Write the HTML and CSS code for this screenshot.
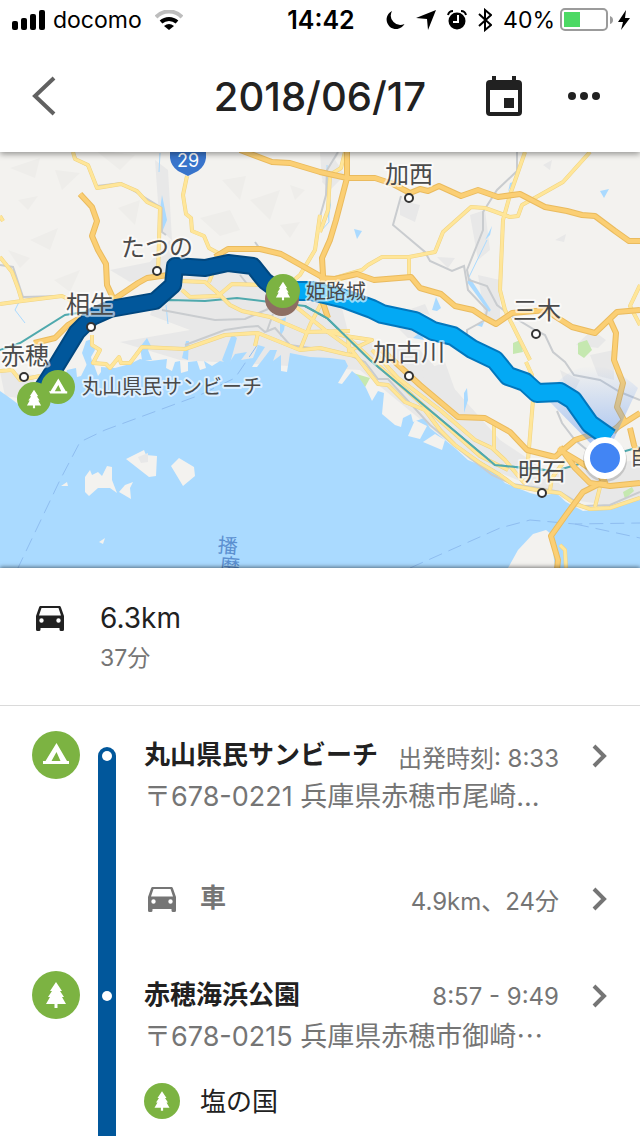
FILE: index.html
```
<!DOCTYPE html>
<html lang="ja">

<head>
    <meta charset="UTF-8">
    <meta name="viewport" content="width=device-width, initial-scale=1.0">
    <title>2018/06/17</title>
    <link rel="stylesheet" href="styles.css">
</head>

<body>
    <!-- Shared icons -->
    <svg class="icon-defs" aria-hidden="true">
        <symbol id="icon-car" viewBox="0 0 28 25">
            <path fill-rule="evenodd" d="M5 0h18c1 0 1.700.5 2 1.400L28 10v13.500q0 1.500-1.500 1.500h-1.500q-1.500 0-1.500-1.500V22H4.500v1.500Q4.500 25 3 25H1.500Q0 25 0 23.500V10L3 1.400C3.300.5 4 0 5 0zM5.500 2 3 9.500h22L22.500 2zM5.500 12.300a2.200 2.200 0 1 0 0 4.400 2.200 2.200 0 0 0 0-4.400zm17 0a2.200 2.200 0 1 0 0 4.400 2.200 2.200 0 0 0 0-4.400z"/>
        </symbol>
        <symbol id="icon-tree" viewBox="0 0 48 48">
            <circle cx="24" cy="24" r="24" fill="#7cb342"/>
            <path fill="#fff" d="M24 11l6 9h-2l4 6h-2l4 7h-8.500v4h-3v-4H14l4-7h-2l4-6h-2z"/>
        </symbol>
        <symbol id="icon-camp" viewBox="0 0 48 48">
            <circle cx="24" cy="24" r="24" fill="#7cb342"/>
            <path fill="#fff" fill-rule="evenodd" d="M24.500 12 35 30h2v3H11v-3h2.500zM24.500 21 19.500 30h9z"/>
        </symbol>
        <symbol id="icon-chevron" viewBox="0 0 16 24">
            <path d="M2 2l10 10L2 22" fill="none" stroke="#757575" stroke-width="4"/>
        </symbol>
    </svg>

    <!-- Status bar -->
    <div class="status-bar">
        <div class="status-left">
            <svg width="34" height="20" viewBox="0 0 34 20">
                <rect x="0" y="11" width="6" height="9" rx="2"/>
                <rect x="9" y="8" width="6" height="12" rx="2"/>
                <rect x="18" y="4" width="6" height="16" rx="2"/>
                <rect x="27" y="0" width="6" height="20" rx="2"/>
            </svg>
            <span class="carrier">docomo</span>
            <svg width="28" height="20" viewBox="0 0 28 20" fill="none">
                <path d="M1 7a18 18 0 0 1 26 0" stroke="#bdbdbd" stroke-width="4"/>
                <path d="M6 12a12 12 0 0 1 16 0" stroke="#000" stroke-width="4"/>
                <path d="M9 16q5-4 10 0l-5 4z" fill="#000"/>
            </svg>
        </div>
        <span class="clock">14:42</span>
        <div class="status-right">
            <svg width="19" height="20" viewBox="0 0 19 20"><path d="M6 1A9.500 9.500 0 1 0 18.500 14 9.500 9.500 0 0 1 6 1z"/></svg>
            <svg width="20" height="20" viewBox="0 0 20 20"><path d="M20 0 12 20 11 9 0 8z"/></svg>
            <svg width="20" height="20" viewBox="0 0 20 20">
                <circle cx="10" cy="11" r="8.500"/>
                <path d="M1 5Q2 1 6 1M14 1q4 0 5 4" stroke="#000" stroke-width="2" fill="none"/>
                <path d="M11 5v7H6" stroke="#fff" stroke-width="2" fill="none"/>
            </svg>
            <svg width="14" height="24" viewBox="0 0 14 24" fill="none" stroke="#000" stroke-width="2"><path d="M1 6l12 11-6 5V2l6 5L1 18"/></svg>
            <span>40%</span>
            <svg class="battery" width="53" height="24" viewBox="0 0 53 24">
                <rect x="1" y="1" width="46" height="21" rx="4" fill="none" stroke="#9b9b9b" stroke-width="2"/>
                <rect x="4" y="4" width="16" height="15" fill="#4cd964"/>
                <path d="M50 8q3 1 3 4t-3 4z" fill="#9b9b9b"/>
            </svg>
            <svg width="12" height="20" viewBox="0 0 12 20"><path d="M8 0 0 12h5L3 20 12 8H7z"/></svg>
        </div>
    </div>

    <!-- Header -->
    <header class="header">
        <button type="button" class="icon-button" aria-label="戻る">
            <svg width="24" height="40" viewBox="0 0 24 40"><path d="M22 2 3 20l19 18" fill="none" stroke="#616161" stroke-width="4"/></svg>
        </button>
        <h1>2018/06/17</h1>
        <div class="actions">
            <button type="button" class="icon-button" aria-label="カレンダー">
                <svg width="36" height="40" viewBox="0 0 36 40" fill="#212121">
                    <path fill-rule="evenodd" d="M6 0h4v4h16V0h4v4h2q4 0 4 4v28q0 4-4 4H4q-4 0-4-4V8q0-4 4-4h2zM4 14v22h28V14z"/>
                    <rect x="18" y="22" width="10" height="10"/>
                </svg>
            </button>
            <button type="button" class="icon-button" aria-label="その他">
                <svg width="32" height="8" viewBox="0 0 32 8" fill="#212121"><circle cx="4" cy="4" r="4"/><circle cx="16" cy="4" r="4"/><circle cx="28" cy="4" r="4"/></svg>
            </button>
        </div>
    </header>

    <!-- Map -->
    <div class="map">
        <svg viewBox="0 152 640 416" role="img" aria-label="地図">
            <defs>
                <linearGradient id="beam" x1="0" y1="1" x2="0" y2="0">
                    <stop offset="0" stop-color="#4285f4" stop-opacity=".5"/>
                    <stop offset="1" stop-color="#4285f4" stop-opacity="0"/>
                </linearGradient>
                <g id="minor">
                    <path d="M0 304 22 301 62 296 72 301M0 257 12 272 18 288 22 301M0 216 3 221M73 152 75 159 88 165 97 188 121 184 137 191 147 202 160 208 158 274M187 176 183 195 186 214 191 218 192 231 204 236 209 248 220 254M320 215 315 250 300 275 288 285"/>
                    <path d="M180 281 205 282 220 295 230 305 242 311 270 317 305 332 350 331M182 290 190 297 218 296 232 284 265 285M209 282 214 270M92 335 92 345 100 350 93 363 106 364 110 368 119 357 121 363 130 363 142 347 185 349 225 335 258 333 300 350 320 348 345 354 356 356M258 333 255 346M300 350 310 325 322 302M0 371 12 370 20 380 40 376"/>
                    <path d="M525 152 510 195 503 220 500 290 505 310 520 340 530 360M526 362 532 375 533 400 528 460M590 152 563 182 540 195 522 205 518 216 510 217 485 208 471 207 443 232 435 252 409 257 382 257 368 265 362 270 335 278M409 257V277M345 152 341 168 330 175 328 210 320 232M640 285 630 306 640 325M322 330 345 336 372 340 349 351 348 335"/>
                    <path d="M290 302 325 330 350 348 378 384 388 385 405 402 425 410 440 430 455 445 480 463 500 475 515 486 542 491 560 493 575 504 590 509 610 508 640 498M372 350 398 378 440 410 475 440 492 448 505 460 525 484M494 425V450M345 335 372 360 395 380 445 425 480 456 508 470M600 487 595 507M550 490 552 478 565 460M560 545 565 550 566 568"/>
                </g>
                <g id="major">
                    <path d="M80 194 92 207 97 221 92 236 98 250 106 264 107 285 113 298M34 343 55 338 68 325 85 315M113 300 138 283 147 278 175 274M215 257 228 249 260 249 281 254 322 277"/>
                    <path d="M240 150 272 162 290 163 320 172 347 178 375 178 393 184 410 193 420 189 428 191 439 186 461 196 478 190 498 197 520 194 545 207 567 211 582 215 595 216 615 231 629 241 640 241M347 152 347 178 336 220 330 240 322 258 323 275 322 300 328 318"/>
                    <path d="M320 278 335 279 357 274 374 280 411 277 420 288 441 294 455 306 473 310 485 318 496 324 512 313 547 310 553 315 572 327 595 333 617 312 640 310M610 320 616 333 614 360 623 383 617 407 624 420 613 432"/>
                    <path d="M382 350 420 385 458 417 485 418 510 432 527 450 555 457 575 440 590 435 610 432 640 413M560 447 575 468 590 483 610 486 640 483M607 480 583 492 566 515 551 536 558 560 557 570M630 428 634 445 640 460M558 449 580 462 600 475 606 486"/>
                </g>
            </defs>

            <rect y="152" width="640" height="416" fill="#f3f2ef"/>

            <!-- Towns and hills -->
            <g fill="#e8e8e8">
                <path d="M165 280 250 270 300 290 340 300 350 340 420 350 500 440 545 470 640 460V510L560 498 470 460 360 370 180 360 120 342 190 330 150 315z"/>
                <path d="M155 160 168 170 172 240 160 230zM110 270 150 262 170 240 174 270 130 282zM0 372 35 375 30 400 5 396zM478 275 500 280 500 320 485 320zM400 200 420 205 415 222 400 215zM330 152 345 175 330 190 322 182zM590 355 614 350 614 380 598 376zM420 372 445 362 455 390 440 405zM560 370 580 380 570 400z"/>
                <path d="M470 215 485 210 490 250 478 260zM320 152 340 152 322 180zM576 345 592 330 606 340 598 348zM388 180 400 178 398 188zM543 165 552 160 550 170zM437 257 455 258 448 268zM555 240 566 234 564 242zM408 310 425 304 430 315zM395 325 418 320 430 338 408 338z"/>
            </g>
            <g fill="#eeedea">
                <path d="M10 168 40 158 35 178zM55 170 80 173 62 190zM18 200 38 196 28 210zM30 240 58 228 50 250zM95 150 135 155 120 170zM118 208 140 200 135 225zM222 180 246 176 240 200zM200 218 230 210 240 230 220 236zM250 200 280 190 270 220zM290 185 305 190 295 200zM280 225 300 222 290 238zM54 280 80 270 70 292zM8 250 30 258 20 268z"/>
            </g>
            <g fill="#c5e8b0"><path d="M349 378 353 373 370 378 363 391zM513 343 520 340 523 352 513 354zM578 343 587 340 592 350 584 358 578 354zM623 492 632 487 634 491 625 499z"/></g>

            <!-- Sea, rivers and ponds -->
            <g fill="#aadaff">
                <path d="M0 391 10 398 18 404 40 396 64 378 67 370 76 368 77 377 81 376 87 364 94 365 98 376 101 372 101 367 115 368 130 364 140 359 150 361 167 359 166 368 172 371 175 362 180 361 181 373 188 371 188 362 197 361 200 370 206 368 204 361 212 366 220 361 229 363 235 354 247 352 241 360 253 358 258 345 265 347 252 367 257 367 270 350 277 350 273 361 281 355 281 371 287 372 290 353 310 357 330 358 345 360 348 366 338 383 342 384 352 371 358 376 366 388 372 401 378 391 384 393 382 414 395 425 401 427 403 418 411 414 413 422 424 418 430 428 440 436 455 448 468 460 485 467 497 475 505 483 515 487 530 493 542 496 556 493 566 502 583 511 610 508 640 500V568H0z"/>
                <path d="M86 341 92 339 95 350 91 357 93 366 88 368 82 353zM147 338 151 346 148 350 152 360 142 360 140 347zM280 320 286 317 284 330 280 337zM222 360 232 334 237 338 229 367zM182 358 186 341 189 341 188 360zM464 413 468 400 467 388 464 393z"/>
                <path d="M354 229 362 231 357 239zM432 310 436 297 441 308 437 311zM600 191 609 189 604 198zM413 338 420 332 424 340zM485 240 492 226 490 235zM470 278 491 310 489 312 467 282zM162 195 167 220 163 230 160 210zM328 185 331 205 328 222zM510 183 513 182 508 192zM476 325 484 322 482 327z"/>
                <path d="M160 153 159 172M20 300 15 310 25 323M487 240 469 277M327 165 329 222 320 232M166 305 168 324" fill="none" stroke="#aadaff" stroke-width="1"/>
            </g>
            <g fill="#f3f2ef">
                <path d="M126 459 144 450 146 455 157 456 156 476 149 477zM171 466 179 458 194 467 195 476 183 486zM85 477 90 470 92 475 98 472 102 476 107 466 112 467 112 480 117 493 110 488 98 488 89 496 85 492zM119 492 125 485 133 482 130 488 131 499zM61 486 67 482 68 486zM99 542 105 538 103 544z"/>
                <path d="M408 436 415 420 427 426 420 439zM423 442 435 434 445 440 442 450zM508 568 518 550 533 534 546 530 551 534 555 568z"/>
            </g>
            <path d="M138 457 148 453 148 462 141 463z" fill="#e8e8e8"/>

            <!-- Ferry lines -->
            <g class="ferry">
                <path d="M17 570 60 480 80 442 105 430 200 395 235 378 258 344"/>
                <path d="M410 568 500 528 530 520 575 524 640 523M575 524 640 538" />
            </g>

            <!-- Railways -->
            <path class="rail" d="M73 152 77 160 88 166 97 186 121 183 162 208 162 232 166 235M0 265 13 267 23 297 62 296 73 302M162 310 215 320 245 319 277 305M185 345 225 330 245 327 258 326 265 332 275 328 290 345 325 350 345 353 365 362 378 379 388 379 430 425 470 458 492 475 512 484 540 488 560 492 583 506 610 505 640 492M267 331 273 314"/>
            <path class="rail" d="M338 152 327 170 326 195 318 224M517 152 517 171 497 190 483 212 483 230 467 270 469 280 487 286 497 305 510 315 535 330 545 335 553 352 565 362 574 375 600 380 620 392 640 400M401 196 393 225 425 252 430 261 452 271 464 266 468 290 487 310 485 320 467 330 467 340M557 411 562 423 575 440 587 450M255 242 260 249M240 275 248 285"/>
            <path class="shinkansen" d="M0 350 20 343 65 315 130 305 170 300 205 301 237 298 270 302 305 306 327 318 370 360 495 465 555 471 600 458 640 447"/>

            <use href="#minor" class="road minor-edge"/>
            <use href="#minor" class="road minor-fill"/>
            <use href="#major" class="road major-edge"/>
            <use href="#major" class="road major-fill"/>
            <path class="shinkansen" d="M305 306 327 318 370 360 495 465 555 471"/>

            <path d="M605 458 545 397Q585 340 638 388z" fill="url(#beam)"/>

            <!-- Route -->
            <path class="route next-edge" d="M283 291 312 291 345 299 372 309 382 314 415 321 433 331 453 336 472 349 495 360 508 376 525 382 537 393 560 392 573 400 590 424 610 438"/>
            <path class="route next-fill" d="M283 291 312 291 345 299 372 309 382 314 415 321 433 331 453 336 472 349 495 360 508 376 525 382 537 393 560 392 573 400 590 424 610 438"/>
            <path class="route past-edge" d="M38 395 52 373 77 332 92 317 110 309 155 301 173 285 175 266 205 268 228 263 253 266 265 281 280 292"/>
            <path class="route past-fill" d="M38 395 52 373 77 332 92 317 110 309 155 301 173 285 175 266 205 268 228 263 253 266 265 281 280 292"/>

            <!-- Place names -->
            <g class="city">
                <text x="121" y="256">たつの</text>
                <text x="66" y="313">相生</text>
                <text x="1" y="364">赤穂</text>
                <text x="385" y="183">加西</text>
                <text x="373" y="361">加古川</text>
                <text x="513" y="319">三木</text>
                <text x="518" y="480">明石</text>
            </g>
            <g class="spot">
                <text x="306" y="299">姫路城</text>
                <text x="82" y="394">丸山県民サンビーチ</text>
                <text x="630" y="465">自</text>
            </g>
            <g class="sea-name">
                <text x="218" y="553" transform="rotate(5 228 545)">播</text>
                <text x="220" y="573" transform="rotate(5 230 565)">磨</text>
            </g>
            <g class="city-dot">
                <circle cx="157" cy="271" r="4"/>
                <circle cx="91" cy="327" r="4"/>
                <circle cx="24" cy="377" r="4"/>
                <circle cx="409" cy="198" r="4"/>
                <circle cx="409" cy="376" r="4"/>
                <circle cx="536" cy="334" r="4"/>
                <circle cx="542" cy="493" r="4"/>
            </g>

            <!-- Route 29 sign -->
            <path d="M170 150h36v8q-1 8-8 13l-10 5-10-5q-7-5-8-13z" fill="#3874cb"/>
            <text class="road-number" x="188" y="167">29</text>

            <!-- Pins -->
            <circle cx="282" cy="299" r="17" fill="#8d6e63"/>
            <use href="#icon-tree" x="266" y="274" width="34" height="34"/>
            <use href="#icon-camp" x="41" y="370" width="34" height="34"/>
            <use href="#icon-tree" x="17" y="382" width="34" height="34"/>
            <circle cx="605" cy="460" r="22" fill="#000" opacity=".15"/>
            <circle cx="605" cy="458" r="21" fill="#fff"/>
            <circle cx="605" cy="458" r="15" fill="#4285f4"/>
        </svg>
    </div>

    <!-- Day summary -->
    <section class="summary">
        <svg class="car"><use href="#icon-car"/></svg>
        <div>
            <p class="distance">6.3km</p>
            <p class="duration">37分</p>
        </div>
    </section>

    <!-- Timeline -->
    <ol class="timeline">
        <li class="entry first">
            <svg class="badge"><use href="#icon-camp"/></svg>
            <div class="track"><span class="dot"></span></div>
            <div class="content">
                <a class="row" href="#beach">
                    <h2>丸山県民サンビーチ</h2>
                    <span class="time">出発時刻: 8:33</span>
                    <svg class="chevron"><use href="#icon-chevron"/></svg>
                </a>
                <p class="address">〒678-0221 兵庫県赤穂市尾崎...</p>
            </div>
        </li>
        <li class="entry leg">
            <div class="track"></div>
            <div class="content">
                <a class="row" href="#drive">
                    <svg class="car"><use href="#icon-car"/></svg>
                    <h3>車</h3>
                    <span class="time">4.9km、24分</span>
                    <svg class="chevron"><use href="#icon-chevron"/></svg>
                </a>
            </div>
        </li>
        <li class="entry">
            <svg class="badge"><use href="#icon-tree"/></svg>
            <div class="track"><span class="dot"></span></div>
            <div class="content">
                <a class="row" href="#park">
                    <h2>赤穂海浜公園</h2>
                    <span class="time">8:57 - 9:49</span>
                    <svg class="chevron"><use href="#icon-chevron"/></svg>
                </a>
                <p class="address">〒678-0215 兵庫県赤穂市御崎⋯</p>
                <div class="sub-place">
                    <svg class="badge-small"><use href="#icon-tree"/></svg>
                    <span>塩の国</span>
                </div>
            </div>
        </li>
    </ol>
</body>

</html>
```
FILE: styles.css
```
* {
    box-sizing: border-box;
}

body {
    margin: 0;
    min-height: 100vh;
    display: flex;
    flex-direction: column;
    font-family: Inter, "Noto Sans CJK JP", sans-serif;
    background-color: #fff;
    color: #212121;
}

h1, h2, h3, p, ol {
    margin: 0;
    padding: 0;
}

svg {
    display: block;
    flex-shrink: 0;
}

.icon-defs {
    position: absolute;
    width: 0;
    height: 0;
}

/* Status bar */
.status-bar {
    position: relative;
    z-index: 2;
    display: grid;
    grid-template-columns: 1fr auto 1fr;
    align-items: center;
    height: 40px;
    padding: 0 10px 0 12px;
    background-color: #fff;
    font-size: 23px;
    color: #000;
}

.status-left, .status-right {
    display: flex;
    align-items: center;
}

.status-left {
    gap: 7px;
}

.status-left .carrier {
    margin-right: 6px;
}

.status-right {
    justify-content: flex-end;
    gap: 11px;
}

.status-right .battery {
    margin: 0 -6px;
}

.clock {
    font-size: 25px;
    font-weight: 600;
}

/* Header */
.header {
    position: relative;
    z-index: 1;
    display: grid;
    grid-template-columns: 1fr auto 1fr;
    align-items: center;
    height: 112px;
    padding: 0 32px;
    background-color: #fff;
    box-shadow: 0 2px 6px rgba(0, 0, 0, 0.4);
}

.header h1 {
    font-size: 40px;
    font-weight: 500;
}

.icon-button {
    border: none;
    padding: 0;
    background: none;
    cursor: pointer;
    justify-self: start;
}

.actions {
    display: flex;
    align-items: center;
    justify-content: flex-end;
    gap: 46px;
    padding-right: 8px;
}

/* Map */
.map svg {
    width: 100%;
    height: auto;
}

.road {
    fill: none;
    stroke-linejoin: round;
}

.minor-edge {
    stroke: #efd382;
    stroke-width: 4px;
}

.minor-fill {
    stroke: #ffe699;
    stroke-width: 3px;
}

.major-edge {
    stroke: #eabb5e;
    stroke-width: 6px;
}

.major-fill {
    stroke: #fbcf74;
    stroke-width: 4px;
}

.rail {
    fill: none;
    stroke: #c9cccf;
    stroke-width: 2px;
}

.shinkansen {
    fill: none;
    stroke: #4fa9ad;
    stroke-width: 2px;
}

.ferry {
    fill: none;
    stroke: #8fbdf0;
    stroke-width: 1px;
    stroke-dasharray: 14 7;
}

.route {
    fill: none;
    stroke-linejoin: round;
}

.past-edge {
    stroke: #01477f;
    stroke-width: 18px;
}

.past-fill {
    stroke: #01579b;
    stroke-width: 14px;
}

.next-edge {
    stroke: #0277bd;
    stroke-width: 20px;
}

.next-fill {
    stroke: #03a9f4;
    stroke-width: 16px;
}

.city, .spot {
    fill: #4a4a4a;
    stroke: rgba(255, 255, 255, 0.6);
    stroke-width: 4px;
    stroke-linejoin: round;
    paint-order: stroke;
}

.city {
    font-size: 24px;
}

.spot {
    font-size: 20px;
}

.sea-name {
    font-size: 20px;
    fill: #5b8fd0;
}

.city-dot {
    fill: #fff;
    stroke: #333;
    stroke-width: 2px;
}

.road-number {
    font-size: 18px;
    fill: #fff;
    text-anchor: middle;
}

/* Day summary */
.summary {
    position: relative;
    display: flex;
    gap: 36px;
    padding: 30px 36px 27px;
    background-color: #fff;
    border-bottom: 1px solid #dadada;
    box-shadow: 0 -1px 4px rgba(0, 0, 0, 0.5);
}

.car {
    width: 28px;
    height: 25px;
    fill: #212121;
}

.summary .car {
    margin-top: 8px;
}

.distance {
    font-size: 28px;
    line-height: 40px;
}

.duration {
    font-size: 23px;
    line-height: 40px;
    color: #757575;
}

/* Timeline */
.timeline {
    position: relative;
    flex: 1;
    display: flex;
    flex-direction: column;
    padding-top: 23px;
    background-color: #fff;
    list-style: none;
}

.entry {
    display: grid;
    grid-template-columns: 48px 18px 1fr;
    padding: 0 32px;
    column-gap: 18px;
    min-height: 120px;
}

.entry:last-child {
    flex: 1;
}

.badge {
    width: 48px;
    height: 48px;
    margin-top: 2px;
}

.track {
    grid-column: 2;
    background-color: #01579b;
}

.dot {
    display: block;
    width: 10px;
    height: 10px;
    margin: 22px auto 0;
    border-radius: 50%;
    background-color: #fff;
}

.first .track {
    margin-top: 18px;
    border-radius: 9px 9px 0 0;
}

.first .dot {
    margin-top: 4px;
}

.content {
    min-width: 0;
    padding-left: 10px;
}

.row {
    display: flex;
    align-items: center;
    height: 54px;
    color: inherit;
    text-decoration: none;
}

.row h2, .row h3 {
    flex: 1;
    padding-bottom: 8px;
    font-size: 26px;
    font-weight: 700;
    white-space: nowrap;
}

.row h3 {
    color: #757575;
}

.leg .row {
    height: 100px;
}

.leg .car {
    fill: #757575;
    margin: 0 24px 0 4px;
}

.time {
    font-size: 24px;
    color: #757575;
    white-space: nowrap;
}

.chevron {
    width: 16px;
    height: 24px;
    margin-left: 33px;
}

.address {
    font-size: 27px;
    line-height: 28px;
    color: #757575;
    white-space: nowrap;
}

.sub-place {
    display: flex;
    align-items: center;
    gap: 20px;
    height: 44px;
    margin-top: 28px;
    font-size: 26px;
}

.sub-place span {
    padding-bottom: 4px;
}

.badge-small {
    width: 36px;
    height: 36px;
}
```
